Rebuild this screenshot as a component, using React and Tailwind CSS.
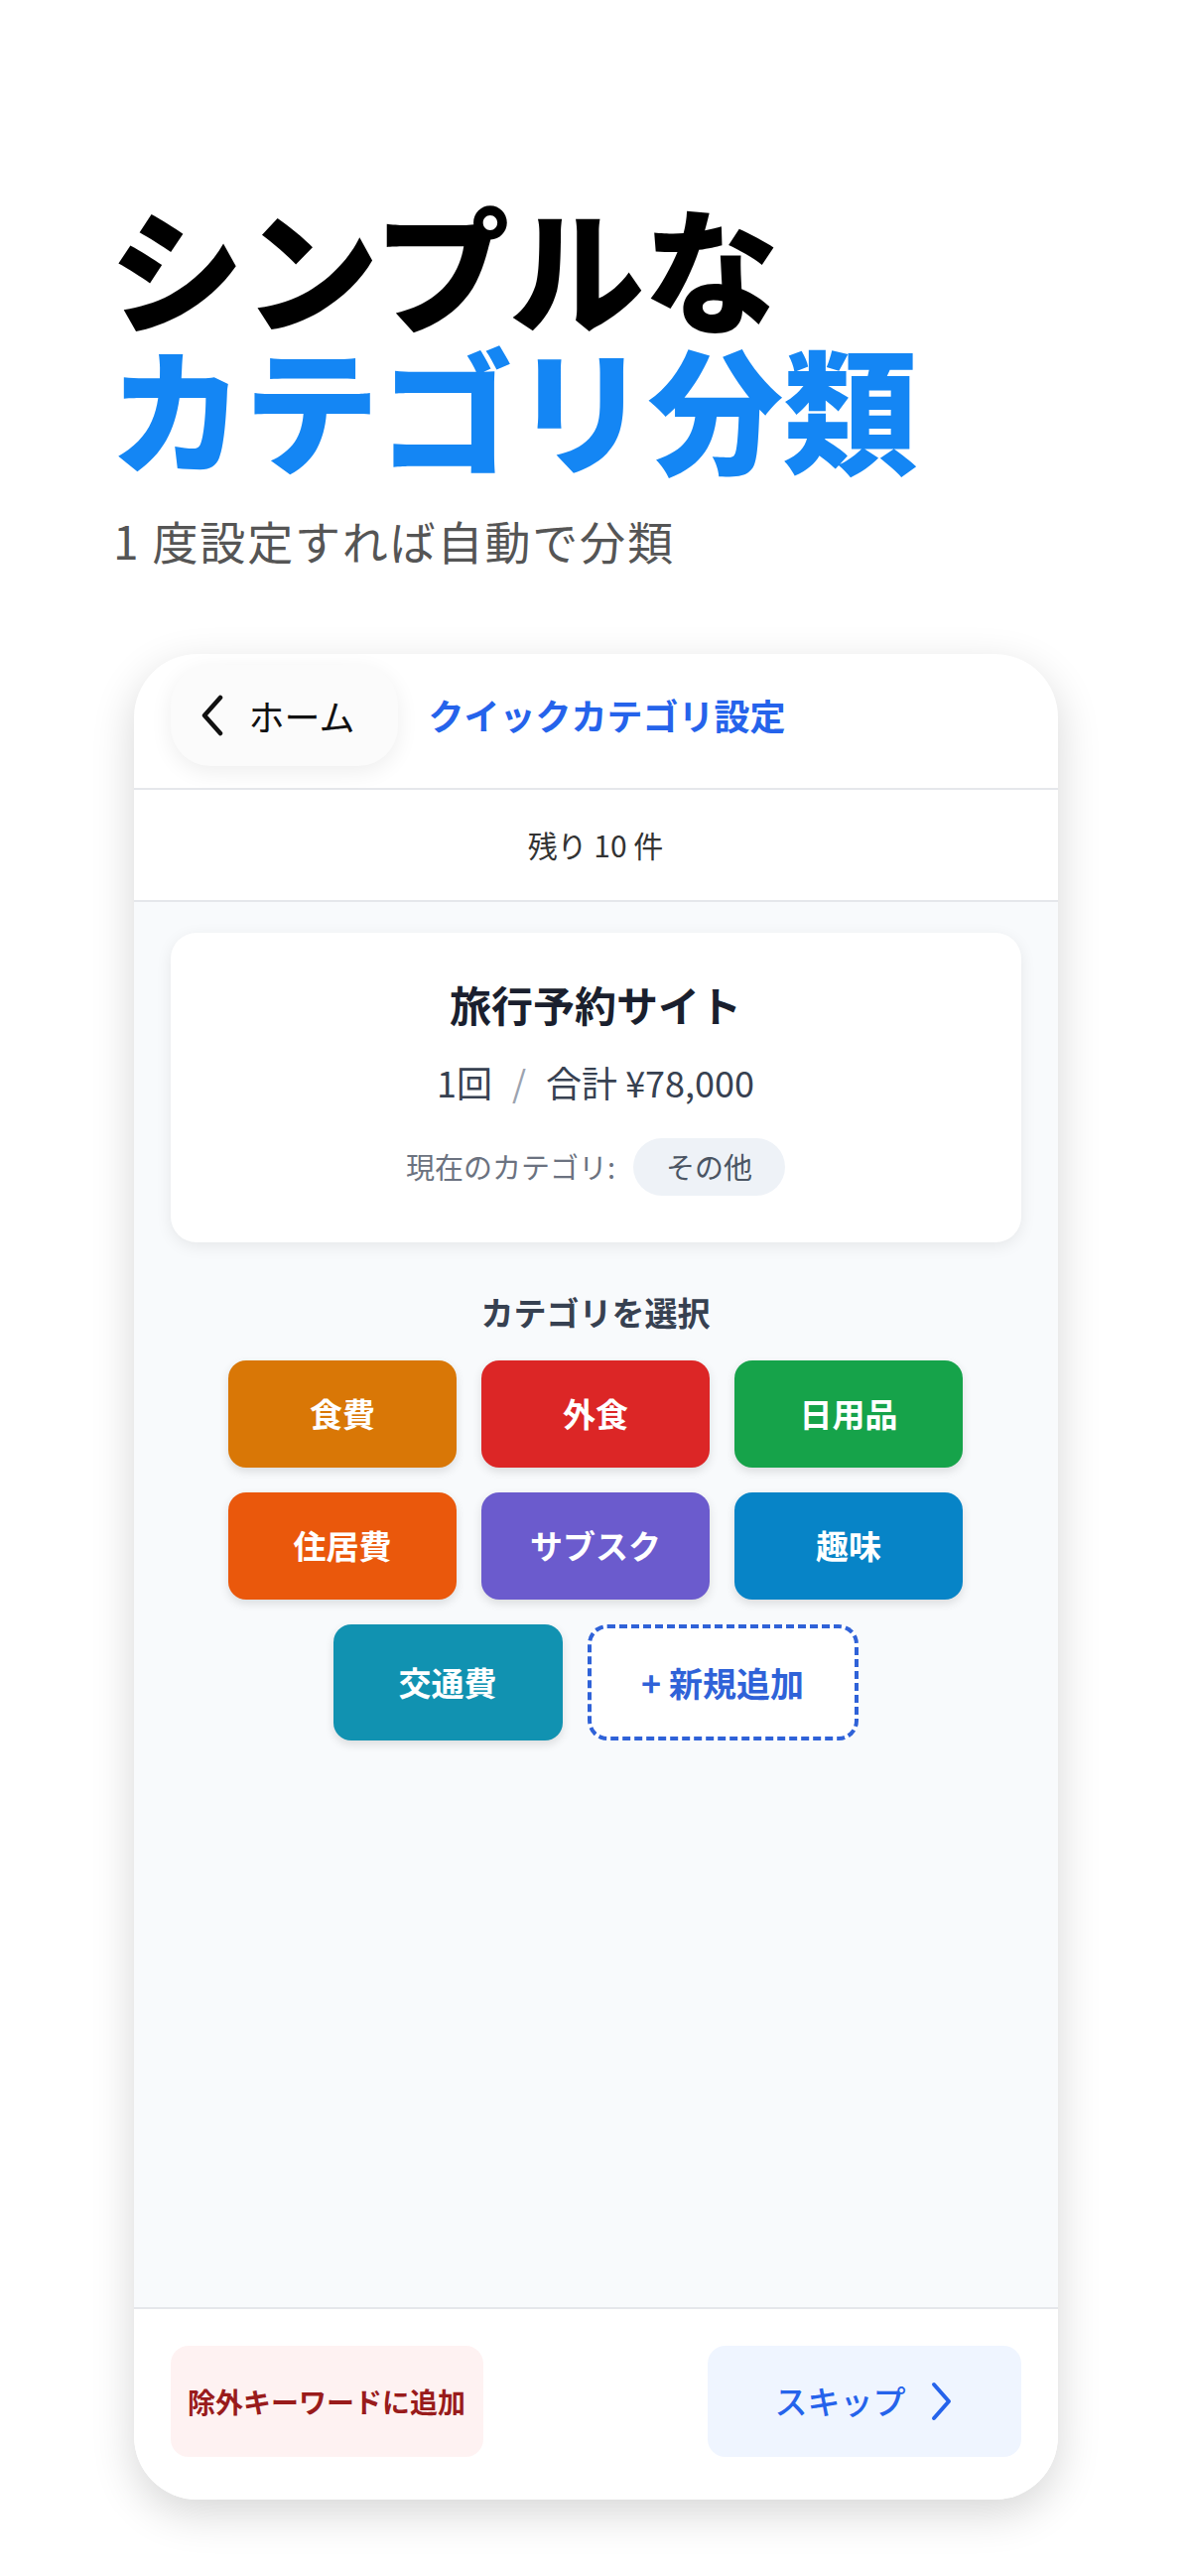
import React from "react";

const categories = [
  [
    { name: "食費", color: "bg-[#d97706]" },
    { name: "外食", color: "bg-[#dc2626]" },
    { name: "日用品", color: "bg-[#16a34a]" },
  ],
  [
    { name: "住居費", color: "bg-[#ea580c]" },
    { name: "サブスク", color: "bg-[#6b5bcd]" },
    { name: "趣味", color: "bg-[#0784c7]" },
  ],
];

const ChevronLeft = () => (
  <svg width="26" height="42" viewBox="0 0 26 42" fill="none">
    <path d="M21 3 L5 21 L21 39" stroke="#111" strokeWidth="4.5" strokeLinecap="round" strokeLinejoin="round" />
  </svg>
);

const ChevronRight = () => (
  <svg width="24" height="42" viewBox="0 0 24 42" fill="none">
    <path d="M4 4 L19 21 L4 38" stroke="#2563eb" strokeWidth="4" strokeLinecap="round" strokeLinejoin="round" />
  </svg>
);

const App = () => {
  return (
    <div className="min-h-screen bg-white font-['Noto_Sans_CJK_JP','Noto_Sans',sans-serif]">
      {/* hero copy */}
      <div className="pl-[110px] pt-[196px]">
        <h1 className="font-black tracking-[-0.015em]">
          <span className="block text-[136px] leading-[142px] text-black">シンプルな</span>
          <span className="block text-[136px] leading-[142px] text-[#1486f4]">カテゴリ分類</span>
        </h1>
        <p className="mt-[34px] text-[46px] leading-[60px] text-[#555] tracking-[0.04em] pl-[4px]">
          1 度設定すれば自動で分類
        </p>
      </div>

      {/* phone */}
      <div className="mx-auto mt-[85px] w-[931px] h-[1860px] rounded-[64px] bg-white shadow-[0_14px_44px_rgba(0,0,0,0.16)] overflow-hidden flex flex-col">
        <div className="h-[137px] border-b-2 border-[#e5e7eb] flex items-start pt-[11px] px-[37px] gap-[31px]">
          <button className="h-[102px] w-[229px] rounded-[40px] bg-[#fbfbfb] shadow-[0_6px_22px_rgba(0,0,0,0.07)] flex items-center pl-[29px] gap-[24px]">
            <ChevronLeft />
            <span className="text-[36px] text-[#111]">ホーム</span>
          </button>
          <h2 className="h-[100px] flex items-center text-[36px] font-bold text-[#2563eb]">クイックカテゴリ設定</h2>
        </div>

        <div className="h-[113px] border-b-2 border-[#e5e7eb] flex items-center justify-center text-[30px] text-[#333]">
          残り 10 件
        </div>

        <div className="flex-1 bg-[#f8fafc] px-[37px] pt-[31px]">
          <div className="bg-white rounded-[26px] shadow-[0_4px_16px_rgba(0,0,0,0.08)] pt-[43px] pb-[47px] flex flex-col items-center">
            <div className="text-[42px] leading-[58px] font-bold text-[#1a1f2e]">旅行予約サイト</div>
            <div className="mt-[24px] text-[36px] leading-[50px] text-[#374151] flex items-center">
              <span>1回</span>
              <span className="mx-[20px] text-[#9ca3af]">/</span>
              <span>合計 ¥78,000</span>
            </div>
            <div className="mt-[32px] flex items-center gap-[18px]">
              <span className="text-[29px] text-[#6b7280]">現在のカテゴリ:</span>
              <span className="h-[58px] px-[33px] rounded-full bg-[#eef2f7] text-[29px] text-[#4b5563] flex items-center">その他</span>
            </div>
          </div>

          <div className="mt-[46px] text-center text-[33px] leading-[48px] font-bold text-[#374151]">カテゴリを選択</div>

          <div className="mt-[25px] flex flex-col items-center gap-[25px]">
            {categories.map((row, i) => (
              <div key={i} className="flex gap-[25px]">
                {row.map((c) => (
                  <button
                    key={c.name}
                    className={`${c.color} w-[230px] h-[108px] rounded-[18px] text-white text-[33px] font-bold shadow-[0_4px_10px_rgba(0,0,0,0.12)]`}
                  >
                    {c.name}
                  </button>
                ))}
              </div>
            ))}
            <div className="flex gap-[25px]">
              <button className="bg-[#1192b1] w-[231px] h-[117px] rounded-[18px] text-white text-[33px] font-bold shadow-[0_4px_10px_rgba(0,0,0,0.12)]">
                交通費
              </button>
              <button className="bg-white w-[273px] h-[117px] rounded-[20px] border-[4px] border-dashed border-[#2f62d8] text-[#2f62d8] text-[34px] font-bold">
                + 新規追加
              </button>
            </div>
          </div>
        </div>

        <div className="h-[194px] border-t-2 border-[#e5e7eb] bg-white px-[37px] pt-[37px] flex justify-between items-start">
          <button className="w-[315px] h-[112px] rounded-[18px] bg-[#fef2f2] text-[#991b1b] text-[28px] font-bold">
            除外キーワードに追加
          </button>
          <button className="w-[316px] h-[112px] rounded-[18px] bg-[#eff5ff] text-[#2563eb] text-[33px] font-medium flex items-center justify-center gap-[24px]">
            <span>スキップ</span>
            <ChevronRight />
          </button>
        </div>
      </div>
    </div>
  );
};

export default App;
